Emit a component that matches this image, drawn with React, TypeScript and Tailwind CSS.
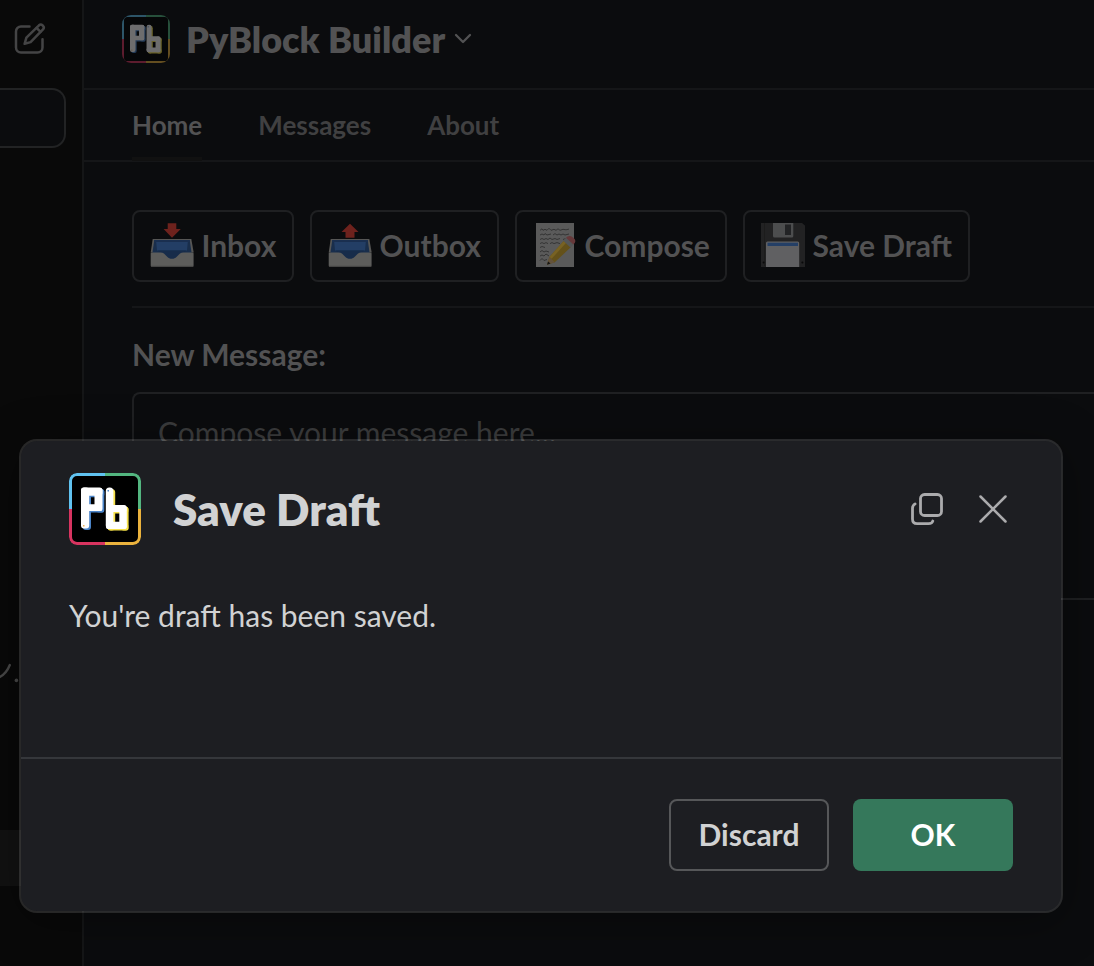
import type { ReactNode } from "react";

function Logo({ className }: { className: string }) {
  const letterP = (
    <>
      <rect x="12" y="14.5" width="8.2" height="41" rx="3" />
      <rect x="12" y="14.5" width="21.5" height="8.2" rx="3" />
      <rect x="25.5" y="15" width="8" height="23" rx="2.5" />
      <rect x="18" y="31.3" width="15" height="6.7" rx="1.5" />
    </>
  );
  const letterB = (
    <>
      <rect x="36.8" y="14.5" width="7.6" height="41.5" rx="3.6" />
      <rect x="40" y="32" width="17.5" height="7" rx="2.5" />
      <rect x="50.3" y="32.5" width="7.5" height="23.5" rx="2.5" />
      <rect x="37" y="48.8" width="20.5" height="7.2" rx="2.5" />
    </>
  );
  return (
    <svg viewBox="0 0 72 72" className={className}>
      <rect x="2" y="2" width="68" height="68" rx="5" fill="#000" />
      <g fill="none" strokeWidth="3">
        <path d="M36 1.5H8A6.5 6.5 0 0 0 1.5 8V36" stroke="#60c2f0" />
        <path d="M36 1.5H64A6.5 6.5 0 0 1 70.5 8V36" stroke="#53b680" />
        <path d="M1.5 36V64A6.5 6.5 0 0 0 8 70.5H36" stroke="#d83460" />
        <path d="M36 70.5H64A6.5 6.5 0 0 0 70.5 64V36" stroke="#eab23d" />
      </g>
      <g fill="#4b84c8" transform="translate(1.8 1.6)">{letterP}</g>
      <g fill="#f6e14b" transform="translate(1.8 1.6)">{letterB}</g>
      <g fill="#fff">
        {letterP}
        {letterB}
      </g>
      <rect x="14" y="52" width="1.5" height="1.5" fill="#f0b45a" />
      <rect x="38.5" y="17" width="1.5" height="1.5" fill="#4b84c8" />
    </svg>
  );
}

function Tray({ up = false }: { up?: boolean }) {
  return (
    <svg viewBox="0 0 44 44" className="size-11 shrink-0">
      <path d="M2.7 16H41.3L43.7 29.5H.7Z" fill="#565655" />
      <path d="M4.3 17H39.7L41.6 30H2.4Z" fill="#192e4c" />
      <path d="M6 17H38L37 27.5H7Z" fill="#233e65" />
      <path d="M4.3 17H39.7V19H4.3Z" fill="#1a2f50" />
      <path d="M8 27.5H36L29 37H15Z" fill="#172c4a" />
      <path
        d="M1.5 29.5H10.5C16 29.5 16 35.8 22 35.8S28 29.5 33.5 29.5H42.5Q43.6 29.5 43.6 30.6V42.6Q43.6 43.8 42.4 43.8H1.8Q.7 43.8 .7 42.6V30.6Q.7 29.5 1.5 29.5Z"
        fill="#5d5d5b"
      />
      <path d="M1 43.3H43.3" stroke="#464645" />
      {up ? (
        <path d="M22 .7L30.5 9H26.5V14.8H17.5V9H13.5Z" fill="#6e221d" />
      ) : (
        <path d="M17.7 .3H26.3V6H30.8L22 14.8L13.6 6H17.7Z" fill="#6e221d" />
      )}
    </svg>
  );
}

function Memo() {
  return (
    <svg viewBox="0 0 44 44" className="size-11 shrink-0">
      <rect x="3" y="0" width="38" height="44" fill="#5a5a5a" />
      <g fill="none" stroke="#303030" strokeWidth=".9">
        <path d="M7 7.3l2-1.5 1 1.5 2-1 2 1 2-2 2 2 3-1 2 1 2-1.5 2 1.5 3-1 3 .5 3-.7" />
        <path d="M7 12l2-1 2 1 1-1.5 2 1.5 4-1M20 12l2-1.4 2 1.4 2-1 2 1 2-1 2 1 4-1" />
        <path d="M7 16.5l2-1 2 1 2-1 2 1 2-1.5 2 1.5 3-1 2 1 3-1M30 16.5l3-1" />
        <path d="M7 20.6l2-1 2 1 2-1 2 1M17 20.6l2-1 2 1 3-1 3 1" />
        <path d="M7 24.5l2-1 3 1M7 29l2-1.5 2 1.5 2-1 3 1M7 33l2-1 2 1 2-2 3 2M7 37.5l2-2 2 2 3-1" />
      </g>
      <path d="M14 41.7L16.4 34L31.2 17.6L38 24L21.8 39.2Z" fill="#64511a" />
      <path d="M16.4 34L31.2 17.6L33.4 19.6L18.6 35.8Z" fill="#786223" />
      <path d="M14 41.7L16.4 34L21.8 39.2Z" fill="#63523b" />
      <path d="M14 41.7L15.1 38.4L17.5 40.6Z" fill="#151515" />
      <path d="M30.2 17.8L33 14.8L40.4 21.4L37.4 24.5Z" fill="#545658" />
      <path d="M33 14.8Q35.8 11.6 40 14.4Q44.6 18 40.4 21.4Z" fill="#66383a" />
    </svg>
  );
}

function Floppy() {
  return (
    <svg viewBox="0 0 44 44" className="size-11 shrink-0">
      <path d="M0 0H41L44 2.5V44H0Z" fill="#222223" />
      <path d="M3.5 0V43" stroke="#1a1a1a" strokeWidth=".7" />
      <path d="M12 0H32.3V13Q32.3 14.5 30.8 14.5H13.5Q12 14.5 12 13Z" fill="#4c4d4e" />
      <rect x="24" y="1.5" width="6" height="10.5" fill="#222325" />
      <path d="M5 20Q5 18.5 6.5 18.5H36.7Q38.2 18.5 38.2 20V44H5Z" fill="#606062" />
      <rect x="6.5" y="19.7" width="30.5" height="3.3" fill="#243f66" />
      <circle cx="2.6" cy="39.5" r="1" fill="#090909" />
      <circle cx="41.4" cy="39.5" r="1" fill="#090909" />
    </svg>
  );
}

function ActionButton({ icon, label, className }: { icon: ReactNode; label: string; className: string }) {
  return (
    <button
      className={`flex h-[72px] items-center gap-[7.5px] whitespace-nowrap rounded-[8px] border-2 border-[#1f2022] pl-4 text-[30px] font-bold leading-10 text-[#525253] ${className}`}
    >
      <span className="-mt-0.5">{icon}</span>
      <span className="-mt-0.5">{label}</span>
    </button>
  );
}

function Sidebar() {
  return (
    <aside className="flex h-full w-[84px] shrink-0 flex-col border-r-2 border-[#151617] bg-[#090909]">
      <div className="h-[88px] pl-[12px] pt-[21px]">
        <svg viewBox="0 0 36 36" className="size-9" fill="none" stroke="#444445" strokeWidth="2.5" strokeLinecap="round" strokeLinejoin="round">
          <path d="M17.5 5.4H9A5 5 0 0 0 4 10.4V26.5A5 5 0 0 0 9 31.5H25.5A5 5 0 0 0 30.5 26.5V18.3" />
          <path d="M12.6 22.8L14.4 16.6L27 4.3Q28.8 2.7 30.7 4.5L31 4.8Q32.7 6.6 31 8.4L18.6 21.1Z" />
          <path d="M24.6 6.9L28.5 10.8" />
        </svg>
      </div>
      <div className="h-[60px] w-[66px] rounded-r-[14px] border-2 border-l-0 border-[#222324] bg-[#0b0c0e]" />
      <svg viewBox="0 0 20 30" className="mt-[512px] h-[30px] w-5" fill="none" stroke="#484848" strokeWidth="2.4" strokeLinecap="round">
        <path d="M-2 18Q6 14.5 9.8 5" />
        <circle cx="16.4" cy="20.4" r="1.8" fill="#484848" stroke="none" />
      </svg>
      <div className="mt-[140px] h-14 w-full bg-[#121212]" />
    </aside>
  );
}

function AppPane() {
  return (
    <main className="flex h-full min-w-0 flex-1 flex-col bg-[#0b0c0e]">
      <header className="flex h-[90px] shrink-0 items-start border-b-2 border-[#151618] pl-[38px] pt-[15px]">
        <Logo className="size-12 shrink-0 rounded-[9px] opacity-40" />
        <h1 className="ml-4 whitespace-nowrap text-[36px] font-extrabold leading-[48px] text-[#525253]">PyBlock Builder</h1>
        <svg viewBox="0 0 18 12" className="ml-[9px] mt-[18px] h-3 w-[18px]" fill="none" stroke="#525253" strokeWidth="2.3" strokeLinecap="round" strokeLinejoin="round">
          <path d="M2 2L9 9L16 2" />
        </svg>
      </header>
      <nav className="flex h-[72px] shrink-0 gap-14 border-b-2 border-[#151618] pl-12 text-[26px] font-bold leading-[70px] text-[#404041]">
        <span className="h-[71px] border-b-4 border-[#111111] text-[#525253]">Home</span>
        <span>Messages</span>
        <span>About</span>
      </nav>
      <section className="flex flex-col pl-12 pt-12">
        <div className="flex gap-4">
          <ActionButton icon={<Tray />} label="Inbox" className="w-[162px]" />
          <ActionButton icon={<Tray up />} label="Outbox" className="w-[189px]" />
          <ActionButton icon={<Memo />} label="Compose" className="w-[212px]" />
          <ActionButton icon={<Floppy />} label="Save Draft" className="w-[227px]" />
        </div>
        <hr className="mt-6 border-t-2 border-[#151618]" />
        <h2 className="mt-6 text-[30px] font-bold leading-[44px] text-[#525253]">New Message:</h2>
        <div className="mt-4 h-[208px] rounded-l-[8px] border-2 border-r-0 border-[#1f2022] pl-6 pt-4 text-[30px] leading-[44px] text-[#3b3c3d]">
          Compose your message here...
        </div>
      </section>
    </main>
  );
}

function Dialog() {
  return (
    <div
      role="dialog"
      className="absolute left-[19px] top-[439px] flex h-[474px] w-[1044px] flex-col rounded-[18px] border-2 border-white/13 bg-[#1d1e22] bg-clip-padding shadow-[0_8px_48px_rgba(0,0,0,0.35)]"
    >
      <div className="flex h-[104px] items-start pl-12 pt-8">
        <Logo className="size-[72px] shrink-0 rounded-[8px]" />
        <h2 className="ml-8 flex-1 text-[44px] font-extrabold leading-[72px] text-[#d1d2d3]">Save Draft</h2>
        <svg viewBox="0 0 36 36" className="mr-8 mt-[18px] size-9" fill="none" stroke="#ababad" strokeWidth="2.8" strokeLinecap="round" strokeLinejoin="round">
          <rect x="11.5" y="3.5" width="21" height="21" rx="4" />
          <path d="M6.1 12.9Q3.5 14.5 3.5 17.2V28Q3.5 32.6 8.1 32.6H19.5Q23.2 32.6 23.8 30" />
        </svg>
        <svg viewBox="0 0 32 32" className="mr-[52px] mt-5 size-8" fill="none" stroke="#ababad" strokeWidth="2.5" strokeLinecap="round">
          <path d="M3.5 3.5L28.5 28.5M28.5 3.5L3.5 28.5" />
        </svg>
      </div>
      <p className="h-[212px] shrink-0 pl-12 pt-12 text-[30px] leading-[44px] text-[#d1d2d3]">You're draft has been saved.</p>
      <footer className="flex flex-1 justify-end gap-6 border-t-2 border-[#35373b] pr-12 pt-10 text-[30px] font-bold">
        <button className="h-[72px] w-40 rounded-[8px] border-2 border-[#565759] pb-0.5 text-[#d1d2d3]">Discard</button>
        <button className="h-[72px] w-40 rounded-[8px] bg-[#35785b] pb-0.5 text-white">OK</button>
      </footer>
    </div>
  );
}

export default function App() {
  return (
    <div className="relative flex h-[966px] w-[1094px] overflow-hidden bg-[#0b0c0e] font-['Lato',sans-serif]">
      <Sidebar />
      <AppPane />
      <Dialog />
    </div>
  );
}
